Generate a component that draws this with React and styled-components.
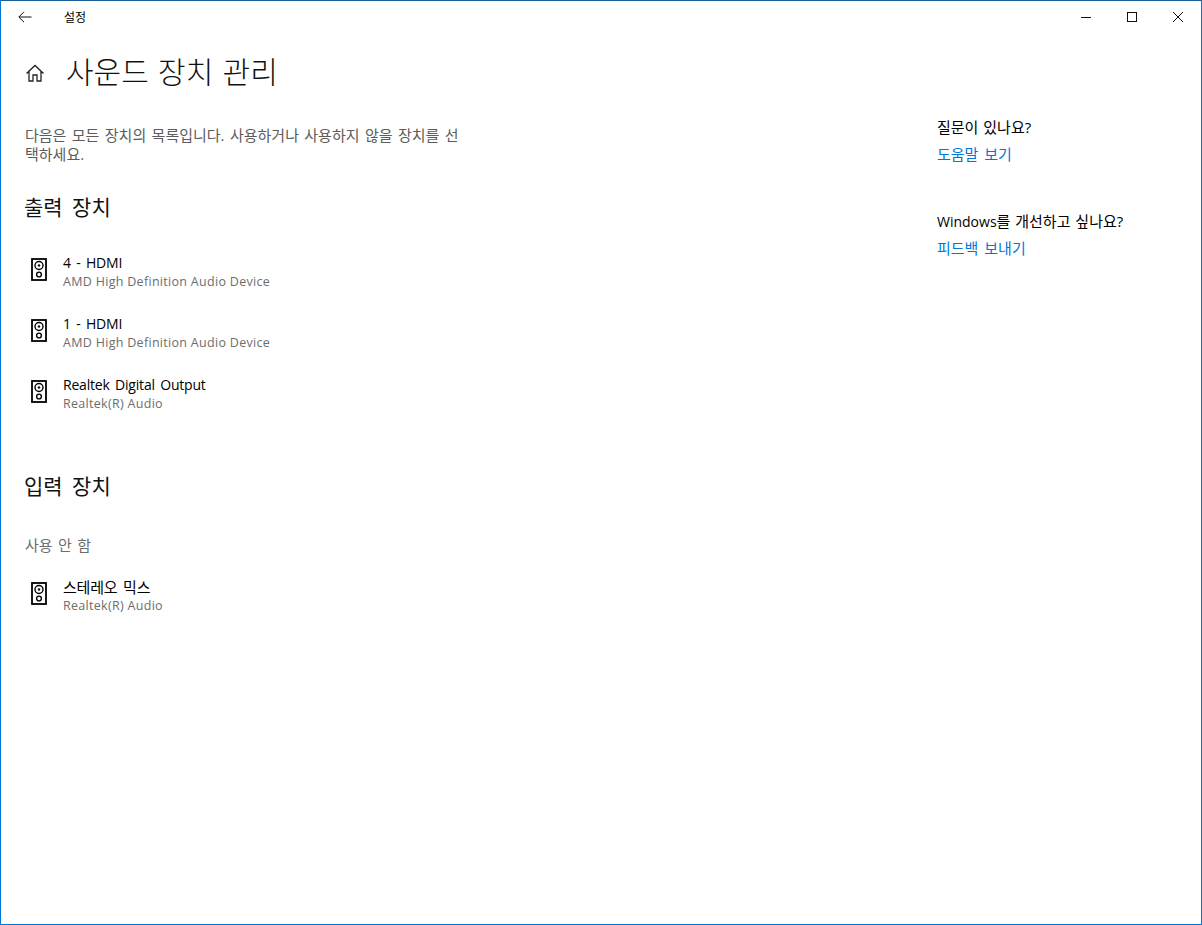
import React from "react"
import styled, { createGlobalStyle } from "styled-components"

const fonts = `"Open Sans", "Noto Sans CJK KR", sans-serif`

const GlobalStyle = createGlobalStyle`
    html, body {
        margin: 0;
        padding: 0;
        background: #fff;
    }
    * {
        box-sizing: border-box;
    }
`

const Window = styled.div`
    width: 1202px;
    height: 925px;
    overflow: hidden;
    background: #fff;
    border: 1px solid #0078d7;
    border-top-color: #1a5e96;
    font-family: ${fonts};
    color: #000;
`

const TitleBar = styled.header`
    display: flex;
    align-items: center;
    height: 32px;
`

const BackButton = styled.div`
    width: 48px;
    height: 32px;
    display: flex;
    align-items: center;
    padding-left: 17px;
`

const AppName = styled.div`
    margin-left: 15px;
    padding-top: 1px;
    font-size: 12px;
    line-height: 32px;
`

const WindowButtons = styled.div`
    display: flex;
    margin-left: auto;
`

const WindowButton = styled.div`
    width: 46px;
    height: 32px;
    display: flex;
    align-items: center;
    justify-content: center;
`

const Body = styled.div`
    display: flex;
    justify-content: space-between;
`

const Main = styled.main`
    width: 500px;
    padding-left: 23px;
`

const PageHeader = styled.div`
    display: flex;
    align-items: center;
    height: 60px;
    margin-top: 9px;
`

const HomeIcon = styled.div`
    width: 20px;
    height: 20px;
    margin: 2px 21px 0 1px;
`

const PageTitle = styled.h1`
    margin: 0;
    font-size: 30px;
    font-weight: 300;
    line-height: 60px;
    word-spacing: 1.5px;
    color: #111;
`

const Intro = styled.p`
    width: 440px;
    margin: 24px 0 0 1px;
    font-size: 15px;
    line-height: 19px;
    word-spacing: 1.5px;
    color: #5c5c5c;
`

const SectionTitle = styled.h2`
    margin: ${props => props.$top}px 0 0 0;
    font-size: 21px;
    font-weight: 400;
    line-height: 28px;
    word-spacing: 4px;
    color: #111;
`

const DeviceList = styled.div`
    display: flex;
    flex-direction: column;
    gap: 21px;
    margin-top: ${props => props.$top}px;
`

const Device = styled.div`
    display: flex;
    align-items: center;
    height: 40px;
`

const DeviceIcon = styled.div`
    width: 16px;
    height: 23px;
    margin: 0 16px 4px 7px;
`

const DeviceName = styled.div`
    font-size: ${props => props.$korean ? 15 : 14}px;
    line-height: 20px;
    letter-spacing: -0.2px;
    word-spacing: 2px;
`

const DeviceSub = styled.div`
    font-size: 12.5px;
    line-height: 17px;
    letter-spacing: 0.3px;
    color: #6d6d6d;
`

const GroupLabel = styled.div`
    margin: 35px 0 0 1px;
    font-size: 15px;
    line-height: 20px;
    word-spacing: 1.5px;
    color: #6d6d6d;
`

const Aside = styled.aside`
    width: 264px;
    padding-top: 84px;
`

const HelpBlock = styled.div`
    margin-bottom: 47px;
`

const HelpTitle = styled.div`
    font-size: 15px;
    line-height: 20px;
    word-spacing: 1px;
    margin-bottom: ${props => props.$gap}px;
`

const Latin = styled.span`
    font-size: 14px;
`

const HelpLink = styled.a`
    display: block;
    font-size: 15px;
    line-height: 20px;
    word-spacing: 2px;
    color: #0078d7;
`

const Speaker = () =>
    <svg width="16" height="23" viewBox="0 0 16 23" fill="none" stroke="#000">
        <rect x="1" y="1" width="14" height="21" strokeWidth="1.8" />
        <circle cx="8" cy="7.5" r="4" strokeWidth="1.4" />
        <circle cx="8" cy="7.5" r="1" fill="#000" strokeWidth="0.5" />
        <circle cx="8" cy="16.5" r="2.4" strokeWidth="1.4" />
    </svg>

const devices = [
    { name: "4 - HDMI", sub: "AMD High Definition Audio Device" },
    { name: "1 - HDMI", sub: "AMD High Definition Audio Device" },
    { name: "Realtek Digital Output", sub: "Realtek(R) Audio" },
]

const DeviceRow = ({ name, sub, korean }) =>
    <Device>
        <DeviceIcon><Speaker /></DeviceIcon>
        <div>
            <DeviceName $korean={korean}>{name}</DeviceName>
            <DeviceSub>{sub}</DeviceSub>
        </div>
    </Device>

const App = () =>
    <Window>
        <GlobalStyle />
        <TitleBar>
            <BackButton>
                <svg width="14" height="12" viewBox="0 0 14 12" fill="none" stroke="#111" strokeWidth="1">
                    <path d="M13.5 6H1M6 .8 .8 6 6 11.2" />
                </svg>
            </BackButton>
            <AppName>설정</AppName>
            <WindowButtons>
                <WindowButton>
                    <svg width="10" height="10" viewBox="0 0 10 10" stroke="#111"><path d="M0 5.5h10" /></svg>
                </WindowButton>
                <WindowButton>
                    <svg width="10" height="10" viewBox="0 0 10 10" fill="none" stroke="#111"><rect x="0.5" y="0.5" width="9" height="9" /></svg>
                </WindowButton>
                <WindowButton>
                    <svg width="10" height="10" viewBox="0 0 10 10" stroke="#111"><path d="M0 0l10 10M10 0 0 10" /></svg>
                </WindowButton>
            </WindowButtons>
        </TitleBar>
        <Body>
            <Main>
                <PageHeader>
                    <HomeIcon>
                        <svg width="20" height="20" viewBox="0 0 20 20" fill="none" stroke="#222" strokeWidth="1.3">
                            <path d="M1.5 10.5 10 2.5l8.5 8M4 8.5V18h4v-6h4v6h4V8.5" />
                        </svg>
                    </HomeIcon>
                    <PageTitle>사운드 장치 관리</PageTitle>
                </PageHeader>
                <Intro>다음은 모든 장치의 목록입니다. 사용하거나 사용하지 않을 장치를 선택하세요.</Intro>
                <SectionTitle $top={29}>출력 장치</SectionTitle>
                <DeviceList $top={30}>
                    {devices.map(d => <DeviceRow key={d.name} {...d} />)}
                </DeviceList>
                <SectionTitle $top={59}>입력 장치</SectionTitle>
                <GroupLabel>사용 안 함</GroupLabel>
                <DeviceList $top={20}>
                    <DeviceRow name="스테레오 믹스" sub="Realtek(R) Audio" korean />
                </DeviceList>
            </Main>
            <Aside>
                <HelpBlock>
                    <HelpTitle $gap={7}>질문이 있나요?</HelpTitle>
                    <HelpLink>도움말 보기</HelpLink>
                </HelpBlock>
                <HelpBlock>
                    <HelpTitle $gap={6}><Latin>Windows</Latin>를 개선하고 싶나요?</HelpTitle>
                    <HelpLink>피드백 보내기</HelpLink>
                </HelpBlock>
            </Aside>
        </Body>
    </Window>

export default App
